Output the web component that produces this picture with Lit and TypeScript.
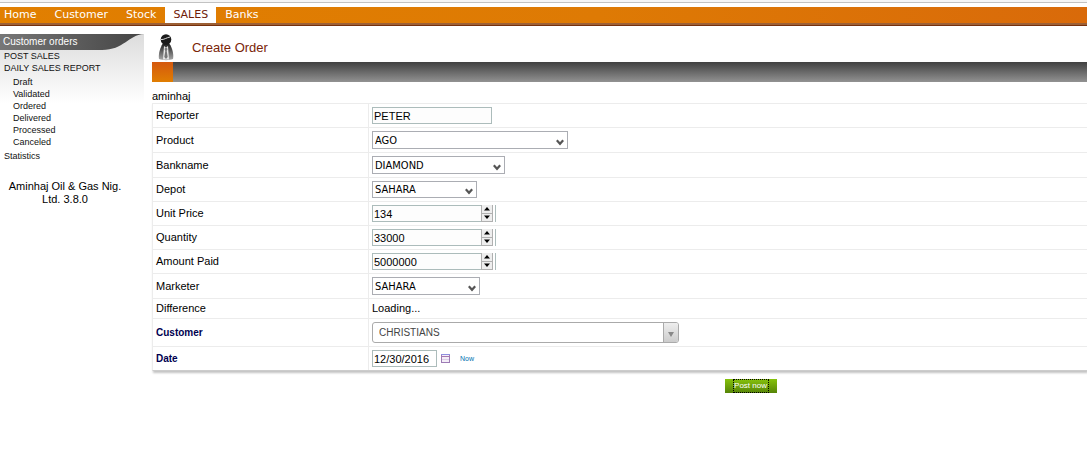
import { LitElement, html, css, nothing } from "lit";
import { customElement, state } from "lit/decorators.js";
import { classMap } from "lit/directives/class-map.js";

type Row = {
  id: string;
  label: string;
  kind: "text" | "select" | "number" | "output" | "combo" | "date";
  value: string;
  size?: string;
  required?: boolean;
};

const rows: Row[] = [
  { id: "reporter", label: "Reporter", kind: "text", value: "PETER" },
  { id: "product", label: "Product", kind: "select", value: "AGO", size: "wide" },
  { id: "bank", label: "Bankname", kind: "select", value: "DIAMOND", size: "medium" },
  { id: "depot", label: "Depot", kind: "select", value: "SAHARA", size: "compact" },
  { id: "price", label: "Unit Price", kind: "number", value: "134" },
  { id: "quantity", label: "Quantity", kind: "number", value: "33000" },
  { id: "paid", label: "Amount Paid", kind: "number", value: "5000000" },
  { id: "marketer", label: "Marketer", kind: "select", value: "SAHARA", size: "small" },
  { id: "difference", label: "Difference", kind: "output", value: "Loading..." },
  { id: "customer", label: "Customer", kind: "combo", value: "CHRISTIANS", required: true },
  { id: "date", label: "Date", kind: "date", value: "12/30/2016", required: true },
];

@customElement("order-menu")
export class OrderMenu extends LitElement {
  static styles = css`
    :host { display: block; }
    .bar {
      display: flex;
      height: 16px;
      border-bottom: 2px solid #9c6036;
      background: linear-gradient(90deg, #e17f00, #de7a04 55%, #d96a0a);
    }
    .frame { border-bottom: 1px solid #77300c; }
    .tab {
      padding: 0 9px;
      font: 11px/16px "DejaVu Sans", sans-serif;
      color: #fff;
      text-decoration: none;
    }
    .tab:first-child { padding-left: 4px; }
    .active { background: #fff; color: #702008; padding: 0 8px; }
  `;
  render() {
    return html`<div class="frame"><nav class="bar">
      ${["Home", "Customer", "Stock", "SALES", "Banks"].map(
        (t) => html`<a href="#" class=${classMap({ tab: true, active: t === "SALES" })}>${t}</a>`
      )}
    </nav></div>`;
  }
}

@customElement("order-sidebar")
export class OrderSidebar extends LitElement {
  static styles = css`
    :host { display: block; font: 9px/12px "Liberation Sans", Arial, sans-serif; color: #111; }
    .panel { background: linear-gradient(#dcdcdc, #fff 70px); }
    .head { display: grid; }
    .head > * { grid-area: 1 / 1; }
    .swoosh { display: block; width: 100%; height: 16px; }
    .title { margin: 0; padding-left: 3px; font-size: 10px; font-weight: normal; line-height: 16px; color: #fff; }
    .list { margin: 0; padding: 0 0 0 4px; list-style: none; }
    .sub { margin: 0; padding: 2px 0 2px 9px; list-style: none; }
    .link { color: inherit; text-decoration: none; }
    .about { margin: 18px 14px 0 0; text-align: center; font-size: 11px; line-height: 13px; color: #000; }
  `;
  render() {
    const link = (t: string) => html`<a class="link" href="#">${t}</a>`;
    return html`
      <nav class="panel">
        <div class="head">
          <svg class="swoosh" viewBox="0 0 144 16" preserveAspectRatio="none" aria-hidden="true">
            <defs>
              <linearGradient id="g" x1="0" x2="1" y1="0" y2="0">
                <stop offset="0" stop-color="#777" /><stop offset="1" stop-color="#444" />
              </linearGradient>
            </defs>
            <path d="M0 0H144C128 1 124 16 102 16H0Z" fill="url(#g)" />
          </svg>
          <h2 class="title">Customer orders</h2>
        </div>
        <ul class="list">
          <li>${link("POST SALES")}</li>
          <li>
            ${link("DAILY SALES REPORT")}
            <ul class="sub">
              ${["Draft", "Validated", "Ordered", "Delivered", "Processed", "Canceled"].map(
                (t) => html`<li>${link(t)}</li>`
              )}
            </ul>
          </li>
          <li>${link("Statistics")}</li>
        </ul>
      </nav>
      <p class="about">Aminhaj Oil &amp; Gas Nig.<br />Ltd. 3.8.0</p>
    `;
  }
}

@customElement("order-form")
export class OrderForm extends LitElement {
  static styles = css`
    :host { display: block; font: 11px/13px "Liberation Sans", Arial, sans-serif; color: #000; }
    input, select, button { box-sizing: border-box; margin: 0; border-radius: 0; font: inherit; color: inherit; appearance: none; outline: 0; }
    .grid { width: 100%; border-collapse: separate; border-spacing: 0; border: 1px solid #ececec; border-right: 0; border-bottom-color: #ccc; box-shadow: 1px 2px 2px #c4c4c4; background: #fff; }
    .name, .cell { border-bottom: 1px solid #ececec; padding: 3px; vertical-align: middle; }
    .grid tr:last-child > * { border-bottom: 0; }
    .name { width: 209px; border-right: 1px solid #ececec; text-align: left; font-weight: normal; }
    .required { font-weight: bold; color: #000050; font-size: 10px; }
    .field { display: block; width: 120px; height: 17px; border: 1px solid #acbcbb; padding: 0 1px; background: #fdfdfd; }
    .pick { display: grid; align-items: center; width: max-content; }
    .pick > * { grid-area: 1 / 1; }
    .select { height: 18px; border: 1px solid #abadb3; padding: 0 2px; background: #fff; font-family: "DejaVu Sans Condensed", "DejaVu Sans", sans-serif; }
    .wide { width: 196px; }
    .medium { width: 133px; }
    .small { width: 108px; }
    .compact { width: 105px; height: 17px; }
    .chevron { justify-self: end; margin-right: 4px; margin-top: 4px; pointer-events: none; }
    .spin { display: flex; width: 124px; height: 17px; box-sizing: border-box; border-right: 1px solid #acbcbb; }
    .spin .field { flex: 1; min-width: 0; border-right: 0; }
    .steps { display: flex; flex-direction: column; width: 12px; box-sizing: border-box; margin-right: 2px; border: solid #b0b0b0; border-width: 0 1px; }
    .step { display: grid; place-items: center; flex: 1; min-height: 0; border: 0; border-bottom: 1px solid #b0b0b0; padding: 0; background: #eee; }
    .arrow { display: block; }
    .combo { width: 307px; height: 21px; border: 1px solid #aaa; border-radius: 3px; padding: 0 6px; background: #fff; font-size: 10px; color: #444; }
    .drop { display: grid; place-items: center; justify-self: end; width: 15px; height: 19px; padding-top: 4px; margin-right: 1px; border-left: 1px solid #aaa; box-sizing: border-box; border-radius: 0 2px 2px 0; background: linear-gradient(#eee, #ccc); pointer-events: none; }
    .dates { display: flex; align-items: center; }
    .date { width: 65px; background: #fff; }
    .icon { display: block; margin: 0 9px 0 4px; border: 0; padding: 0; background: none; }
    .now { border: 0; padding: 0; background: none; font-size: 7px; color: #0070b0; }
    .actions { display: flex; justify-content: center; padding: 8px 0 0 262px; }
    .post { width: 52px; height: 14px; border: 0; padding: 0 8px; background: linear-gradient(#86c20c, #568407); font-size: 8px; line-height: 12px; color: #fff; }
    .focus { display: flex; justify-content: center; box-sizing: border-box; height: 14px; border: 1px dotted #000; white-space: nowrap; }
  `;

  @state() values: Record<string, string> = Object.fromEntries(rows.map((r) => [r.id, r.value]));

  set(id: string, value: string) {
    this.values = { ...this.values, [id]: value };
  }

  control(r: Row) {
    const value = this.values[r.id];
    const onInput = (e: Event) => this.set(r.id, (e.target as HTMLInputElement).value);
    switch (r.kind) {
      case "text":
        return html`<input class="field" id=${r.id} .value=${value} @input=${onInput} />`;
      case "select":
        return html`<div class="pick">
          <select class="select ${r.size}" id=${r.id}><option>${r.value}</option></select>
          <svg class="chevron" width="8" height="7" viewBox="0 0 8 7" aria-hidden="true">
            <path d="M0.8 1.2L4 4.8L7.2 1.2" fill="none" stroke="#555" stroke-width="2.2" />
          </svg>
        </div>`;
      case "number":
        return html`<div class="spin">
          <input class="field" type="text" inputmode="numeric" id=${r.id} .value=${value} @input=${onInput} />
          <div class="steps">
            <button class="step" type="button" aria-label="Increase" @click=${() => this.set(r.id, String(Number(value) + 1))}>
              <svg class="arrow" width="6" height="4" viewBox="0 0 6 4"><path d="M0 3.5L3 0L6 3.5Z" /></svg>
            </button>
            <button class="step" type="button" aria-label="Decrease" @click=${() => this.set(r.id, String(Number(value) - 1))}>
              <svg class="arrow" width="6" height="4" viewBox="0 0 6 4"><path d="M0 0.5L3 4L6 0.5Z" /></svg>
            </button>
          </div>
        </div>`;
      case "output":
        return html`<output id=${r.id}>${value}</output>`;
      case "combo":
        return html`<div class="pick">
          <select class="combo" id=${r.id}><option>${r.value}</option></select>
          <span class="drop"><svg class="arrow" width="6" height="5" viewBox="0 0 6 5"><path d="M0 0H6L3 5Z" fill="#888" /></svg></span>
        </div>`;
      case "date":
        return html`<div class="dates">
          <input class="field date" id=${r.id} .value=${value} @input=${onInput} />
          <button class="icon" type="button" aria-label="Pick a date">
            <svg class="arrow" width="10" height="9" viewBox="0 0 10 9">
              <rect x="0.5" y="0.5" width="8" height="8" fill="#f4eef8" stroke="#9d7bb5" />
              <path d="M0 .5H9" stroke="#8f8fe0" /><path d="M0 2.5H9" stroke="#a678b0" />
              <path d="M1 5.5H8" stroke="#dccde6" />
            </svg>
          </button>
          <button class="now" type="button">Now</button>
        </div>`;
      default:
        return nothing;
    }
  }

  render() {
    return html`<form @submit=${(e: Event) => e.preventDefault()}>
      <table class="grid">
        <tbody>
          ${rows.map(
            (r) => html`<tr>
              <th class="name" scope="row">
                <label for=${r.id} class=${classMap({ required: !!r.required })}>${r.label}</label>
              </th>
              <td class="cell">${this.control(r)}</td>
            </tr>`
          )}
        </tbody>
      </table>
      <div class="actions"><button class="post" type="submit"><span class="focus">Post now</span></button></div>
    </form>`;
  }
}

@customElement("app-root")
export class AppRoot extends LitElement {
  static styles = css`
    :host { display: block; min-height: 100vh; overflow-x: hidden; background: #fff; font: 11px/13px "Liberation Sans", Arial, sans-serif; }
    .edge { height: 2px; margin-bottom: 4px; border-bottom: 1px solid #c2c2c2; background: #f5f5f5; }
    .page { display: grid; grid-template-columns: 144px minmax(0, 1fr); column-gap: 8px; padding-top: 8px; }
    .top { display: flex; align-items: center; height: 28px; padding-left: 5px; gap: 17px; }
    .title { margin: 0; font-size: 13px; line-height: 16px; font-weight: normal; color: #7a2408; }
    .strip { height: 20px; background: linear-gradient(#404040, #929292); }
    .chip { width: 21px; height: 20px; background: linear-gradient(#d4580e, #e07e02); }
    .user { margin: 0; padding: 8px 0 0; }
  `;
  render() {
    return html`
      <div class="edge"></div>
      <order-menu></order-menu>
      <div class="page">
        <order-sidebar></order-sidebar>
        <main>
          <header class="top">
            <svg width="18" height="28" viewBox="0 0 18 28" aria-hidden="true">
              <defs>
                <linearGradient id="b" x1="0" x2="0" y1="0" y2="1">
                  <stop offset="0" stop-color="#222" /><stop offset="1" stop-color="#aaa" />
                </linearGradient>
              </defs>
              <path d="M5.500 10H12.500C15 13 17 20 16 25C12 26.500 6 26.500 2 25C1 20 3.500 13 5.500 10Z" fill="url(#b)" />
              <path d="M7 12L9 13.500L11 12L12 25.500H6Z" fill="#e8e8e8" />
              <path d="M9 13L10.500 15L9.700 17L10.700 23L9 25L7.300 23L8.300 17L7.500 15Z" fill="#777" />
              <circle cx="9" cy="5.500" r="5.300" fill="#1b1b1b" />
              <path d="M4 5.500C7 6 9.500 3.500 13 3" stroke="#ddd" stroke-width="1" fill="none" />
            </svg>
            <h1 class="title">Create Order</h1>
          </header>
          <div class="strip"><div class="chip"></div></div>
          <p class="user">aminhaj</p>
          <order-form></order-form>
        </main>
      </div>
    `;
  }
}
